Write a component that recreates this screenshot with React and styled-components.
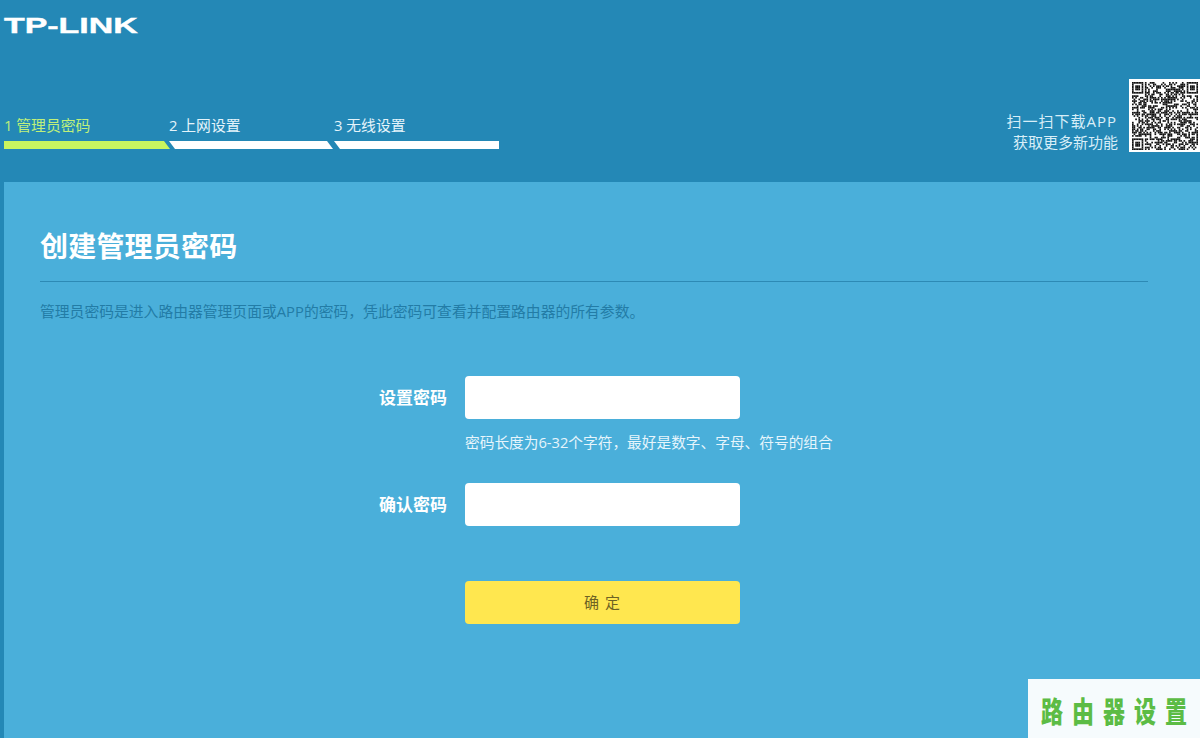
import React from "react"
import styled, { createGlobalStyle } from "styled-components"

const cjk = `"Open Sans", "Noto Sans CJK SC", sans-serif`

const GlobalStyle = createGlobalStyle`
  html, body {
    margin: 0;
    padding: 0;
    height: 100%;
    overflow: hidden;
    background: #2488b6;
    font-family: ${cjk};
  }
`

const Page = styled.div`
  width: 1200px;
  height: 738px;
  display: flex;
  flex-direction: column;
  position: relative;
  overflow: hidden;
  background: #2488b6;
`

const Header = styled.header`
  height: 182px;
  flex: none;
  display: flex;
  flex-direction: column;
  box-sizing: border-box;
  padding-left: 4px;
`

const Logo = styled.div`
  height: 77px;
  flex: none;
  box-sizing: border-box;
  padding-top: 14px;
  font-family: "Liberation Sans", sans-serif;
  font-weight: 700;
  font-size: 22px;
  line-height: 23px;
  color: #fff;
  -webkit-text-stroke: 0.4px #fff;
  transform: scaleX(1.54);
  transform-origin: left top;
`

const HeaderRow = styled.div`
  display: flex;
  justify-content: space-between;
`

const Steps = styled.div`
  display: flex;
  padding-top: 38px;
`

const Step = styled.div`
  width: 165px;
  color: ${p => (p.$active ? "#bff07a" : "#e4f4fb")};
  font-size: 14.8px;
  line-height: 20px;
`

const StepBar = styled.div`
  height: 8px;
  margin-top: 6px;
  width: ${p => (p.$first ? 166 : 165)}px;
  background: ${p => (p.$active ? "#c9f55f" : "#fff")};
  clip-path: ${p =>
    p.$first
      ? "polygon(0 0, 160px 0, 166px 100%, 0 100%)"
      : p.$last
      ? "polygon(0 0, 100% 0, 100% 100%, 6px 100%)"
      : "polygon(0 0, 158px 0, 164px 100%, 6px 100%)"};
`

const Promo = styled.div`
  display: flex;
  align-items: flex-end;
  gap: 12px;
  padding-top: 2px;
`

const PromoText = styled.div`
  text-align: right;
  color: #d8eef8;
  font-size: 15px;
  line-height: 21px;
  margin-bottom: -1px;
`

const PromoLine = styled.div`
  letter-spacing: ${p => p.$spacing || 0}px;
  margin-right: ${p => p.$shift || 0}px;
`

const QrBox = styled.div`
  width: 71px;
  height: 73px;
  background: #fff;
  flex: none;
  display: flex;
  align-items: center;
  justify-content: center;
`

const Panel = styled.main`
  flex: 1;
  margin-left: 4px;
  background: #4aafda;
  box-sizing: border-box;
  padding: 46px 52px 0 36px;
`

const Title = styled.h1`
  margin: 0;
  font-size: 28px;
  line-height: 36px;
  font-weight: 700;
  letter-spacing: 0.2px;
  color: #fff;
  padding-bottom: 17px;
  border-bottom: 1px solid #2d8ab5;
`

const Intro = styled.p`
  margin: 19px 0 0;
  font-size: 14.8px;
  line-height: 20px;
  white-space: nowrap;
  color: #237ca6;
`

const Form = styled.form`
  margin-top: 55px;
  display: grid;
  grid-template-columns: 407px 275px;
  column-gap: 18px;
  align-items: center;
`

const Label = styled.label`
  text-align: right;
  font-size: 17px;
  font-weight: 700;
  color: #fff;
  padding-bottom: 2px;
`

const Field = styled.input`
  height: 43px;
  width: 275px;
  box-sizing: border-box;
  border: 0;
  border-radius: 4px;
  background: #fff;
  padding: 0 10px;
`

const Hint = styled.div`
  grid-column: 2;
  white-space: nowrap;
  font-size: 14.7px;
  line-height: 20px;
  color: #e6f5fc;
  margin: 13px 0 31px;
`

const Submit = styled.button`
  grid-column: 2;
  margin-top: 55px;
  height: 43px;
  width: 275px;
  border: 0;
  border-radius: 4px;
  background: #ffe74f;
  color: #6d6224;
  font-family: inherit;
  font-size: 15px;
  letter-spacing: 1px;
  padding: 0 0 2px;
`

const Watermark = styled.div`
  position: absolute;
  right: 0;
  bottom: 0;
  width: 172px;
  height: 59px;
  background: #f6fbfd;
  display: flex;
  align-items: center;
  justify-content: center;
  box-sizing: border-box;
  padding-top: 3px;
  gap: 9px;
  color: #5cbc45;
  font-family: "Noto Sans CJK SC", sans-serif;
  font-weight: 900;
  font-size: 22px;
  line-height: 1;
`

const WatermarkChar = styled.span`
  transform: scaleY(1.32);
`

// fake-but-plausible QR modules, seeded so each render looks the same
const QrCode = () => {
  const n = 41
  const rects = []
  let seed = 7
  const finder = (x, y) =>
    x >= 0 && x < 7 && y >= 0 && y < 7 && (x === 0 || x === 6 || y === 0 || y === 6 || (x >= 2 && x <= 4 && y >= 2 && y <= 4))
  const inFinderZone = (x, y) => (x < 8 && y < 8) || (x >= n - 8 && y < 8) || (x < 8 && y >= n - 8)
  for (let y = 0; y < n; y++) {
    for (let x = 0; x < n; x++) {
      seed = (seed * 1103515245 + 12345) & 0x7fffffff
      let on = (seed >> 16) % 100 < 52
      if (inFinderZone(x, y)) {
        on = finder(x, y) || finder(x - (n - 7), y) || finder(x, y - (n - 7))
      }
      if (on) rects.push(<rect key={`${x}-${y}`} x={x} y={y} width="1.02" height="1.02" />)
    }
  }
  return (
    <svg width="66" height="68" viewBox={`0 0 ${n} ${n}`} preserveAspectRatio="none" fill="#111">
      {rects}
    </svg>
  )
}

const steps = ["1 管理员密码", "2 上网设置", "3 无线设置"]

export default function App() {
  return (
    <Page>
      <GlobalStyle />
      <Header>
        <Logo>TP-LINK</Logo>
        <HeaderRow>
          <Steps>
            {steps.map((s, i) => (
              <Step key={s} $active={i === 0}>
                {s}
                <StepBar $active={i === 0} $first={i === 0} $last={i === 2} />
              </Step>
            ))}
          </Steps>
          <Promo>
            <PromoText>
              <PromoLine $spacing={1}>扫一扫下载APP</PromoLine>
              <PromoLine $shift={-1}>获取更多新功能</PromoLine>
            </PromoText>
            <QrBox>
              <QrCode />
            </QrBox>
          </Promo>
        </HeaderRow>
      </Header>
      <Panel>
        <Title>创建管理员密码</Title>
        <Intro>管理员密码是进入路由器管理页面或APP的密码，凭此密码可查看并配置路由器的所有参数。</Intro>
        <Form>
          <Label>设置密码</Label>
          <Field type="password" />
          <Hint>密码长度为6-32个字符，最好是数字、字母、符号的组合</Hint>
          <Label>确认密码</Label>
          <Field type="password" />
          <Submit type="button">确 定</Submit>
        </Form>
      </Panel>
      <Watermark>
        {["路", "由", "器", "设", "置"].map(c => (
          <WatermarkChar key={c}>{c}</WatermarkChar>
        ))}
      </Watermark>
    </Page>
  )
}
